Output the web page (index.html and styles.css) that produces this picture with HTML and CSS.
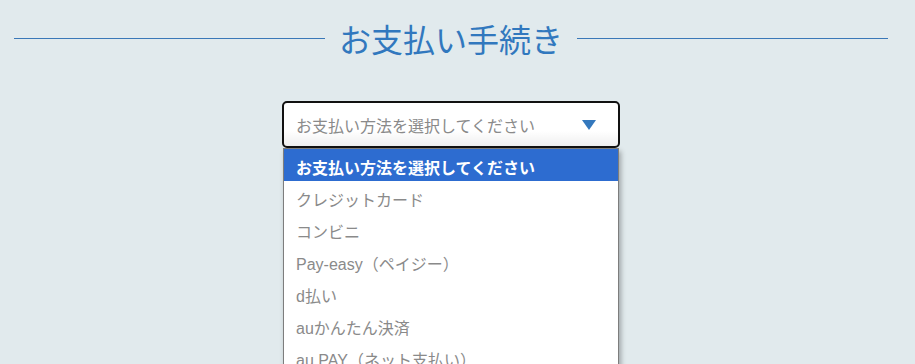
FILE: index.html
```html
<!DOCTYPE html>
<html lang="ja">
<head>
  <meta charset="UTF-8">
  <meta name="viewport" content="width=device-width, initial-scale=1.0">
  <title>お支払い手続き</title>
  <link rel="stylesheet" href="styles.css">
</head>
<body>
  <div class="page">
    <h1 class="title-row">
      <span class="title-line"></span>
      <span class="title-text">お支払い手続き</span>
      <span class="title-line"></span>
    </h1>

    <div class="picker">
      <div class="select-box">
        <span class="select-value">お支払い方法を選択してください</span>
        <svg class="select-arrow" width="14" height="10" viewBox="0 0 14 10">
          <polygon points="0,0 14,0 7,10" fill="#3478bd"/>
        </svg>
      </div>
      <ul class="option-list">
        <li class="option selected">お支払い方法を選択してください</li>
        <li class="option">クレジットカード</li>
        <li class="option">コンビニ</li>
        <li class="option">Pay-easy（ペイジー）</li>
        <li class="option">d払い</li>
        <li class="option">auかんたん決済</li>
        <li class="option">au PAY（ネット支払い）</li>
      </ul>
    </div>
  </div>
</body>
</html>
```

FILE: styles.css
```css
body {
  margin: 0;
  padding: 0;
  background: #e1eaed;
  font-family: "Liberation Sans", "Noto Sans CJK JP", sans-serif;
  overflow: hidden;
}

.page {
  padding: 22px 27px 0 14px;
}

.title-row {
  display: flex;
  align-items: center;
  gap: 14px;
  margin: 0;
  height: 32px;
}

.title-line {
  flex: 1;
  height: 1px;
  background: #3a78b8;
}

.title-text {
  font-family: "Noto Sans CJK JP", sans-serif;
  font-size: 32px;
  font-weight: 400;
  line-height: 32px;
  color: #3178be;
}

.picker {
  width: 338px;
  margin: 47px auto 0;
}

.select-box {
  display: flex;
  align-items: center;
  justify-content: space-between;
  height: 43px;
  padding: 0 22px 0 12px;
  border: 2px solid #111;
  border-radius: 5px;
  background: linear-gradient(#fff 65%, #efefef);
}

.select-value {
  font-size: 16px;
  color: #8a8a8a;
}

.option-list {
  list-style: none;
  margin: 0 1px;
  padding: 0;
  background: #fff;
  border: 1px solid #7d7d7d;
  box-shadow: 2px 3px 5px rgba(0, 0, 0, 0.3);
}

.option {
  display: flex;
  align-items: center;
  box-sizing: border-box;
  height: 32px;
  padding: 3px 12px 0;
  font-size: 16px;
  color: #8a8a8a;
}

.option.selected {
  background: #2d6cd0;
  color: #fff;
  font-weight: bold;
}
```
